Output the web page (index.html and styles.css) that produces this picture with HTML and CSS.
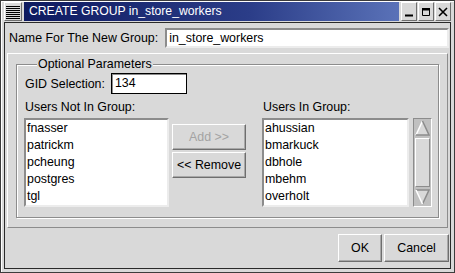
FILE: index.html
```html
<!DOCTYPE html>
<html lang="en">
<head>
    <meta charset="UTF-8">
    <title>CREATE GROUP in_store_workers</title>
    <link rel="stylesheet" href="styles.css">
</head>
<body>
    <div class="window">
        <div class="titlebar">
            <div class="menu-btn">
                <svg width="14" height="14" viewBox="0 0 14 14">
                    <path d="M0 1.5H14M0 3.5H14M0 5.5H14M0 7.5H14M0 9.5H14M0 11.5H14M0 13.5H14" stroke="#000" stroke-width="1"/>
                </svg>
            </div>
            <div class="title">CREATE GROUP in_store_workers</div>
            <div class="wm-btns">
                <div class="wm-btn">
                    <svg width="10" height="10" viewBox="0 0 10 10"><path d="M1 7.5H9V9.5H1Z" fill="#000"/></svg>
                </div>
                <div class="wm-btn">
                    <svg width="10" height="10" viewBox="0 0 10 10"><path d="M1.5 1.5H8.5V8.5H1.5Z" fill="none" stroke="#000"/><path d="M1 1H9V3.5H1Z" fill="#000"/></svg>
                </div>
                <div class="wm-btn">
                    <svg width="10" height="10" viewBox="0 0 10 10"><path d="M1 1L9 9M9 1L1 9" stroke="#000" stroke-width="1.6"/></svg>
                </div>
            </div>
        </div>

        <div class="client">
            <div class="name-row">
                <span class="label">Name For The New Group:</span>
                <div class="entry name-entry">in_store_workers</div>
            </div>

            <div class="panel">
                <div class="group">
                    <span class="legend">Optional Parameters</span>

                    <div class="gid-row">
                        <span class="label">GID Selection:</span>
                        <div class="entry gid-entry">134</div>
                    </div>

                    <div class="lists">
                        <div class="col col-left">
                            <div class="col-label">Users Not In Group:</div>
                            <div class="listbox">
                                <div class="item">fnasser</div>
                                <div class="item">patrickm</div>
                                <div class="item">pcheung</div>
                                <div class="item">postgres</div>
                                <div class="item">tgl</div>
                            </div>
                        </div>

                        <div class="mid">
                            <div class="btn btn-move disabled">Add &gt;&gt;</div>
                            <div class="btn btn-move">&lt;&lt; Remove</div>
                        </div>

                        <div class="col col-right">
                            <div class="col-label">Users In Group:</div>
                            <div class="list-wrap">
                                <div class="listbox">
                                    <div class="item">ahussian</div>
                                    <div class="item">bmarkuck</div>
                                    <div class="item">dbhole</div>
                                    <div class="item">mbehm</div>
                                    <div class="item">overholt</div>
                                </div>
                                <div class="scrollbar">
                                    <svg class="arrow" width="15" height="16" viewBox="0 0 15 16">
                                        <path d="M7.5 1L1 15H14Z" fill="#d9d9d9"/>
                                        <path d="M7.5 1L1 15" stroke="#fff" stroke-width="1.5" fill="none"/>
                                        <path d="M7.5 1L14 15H1" stroke="#8c8c8c" stroke-width="1.5" fill="none"/>
                                    </svg>
                                    <div class="slider"></div>
                                    <svg class="arrow" width="15" height="16" viewBox="0 0 15 16">
                                        <path d="M1 1H14L7.5 15Z" fill="#d9d9d9"/>
                                        <path d="M1 1H14L7.5 15" stroke="#8c8c8c" stroke-width="1.5" fill="none"/>
                                        <path d="M1 1L7.5 15" stroke="#fff" stroke-width="1.5" fill="none"/>
                                    </svg>
                                </div>
                            </div>
                        </div>
                    </div>
                </div>
            </div>

            <div class="btn-row">
                <div class="btn btn-ok">OK</div>
                <div class="btn btn-cancel">Cancel</div>
            </div>
        </div>
    </div>
</body>
</html>
```

FILE: styles.css
```css
body {
    margin: 0;
    background: #d9d9d9;
    font-family: "Liberation Sans", Arial, sans-serif;
    font-size: 12.4px;
    color: #000;
}

.window {
    width: 455px;
    height: 273px;
    box-sizing: border-box;
    border: 1px solid #3c3c3c;
    box-shadow: inset 1px 1px 0 #fff;
    background: #d9d9d9;
    padding: 1px 3px 3px 3px;
    display: flex;
    flex-direction: column;
}

/* title bar */
.titlebar {
    height: 19px;
    display: flex;
    align-items: stretch;
}

.menu-btn {
    width: 18px;
    display: flex;
    justify-content: center;
    align-items: center;
    box-sizing: border-box;
    border: 1px solid;
    border-color: #fff #6e6e6e #6e6e6e #fff;
    background: #d9d9d9;
    margin-right: 2px;
}

.title {
    flex: 1;
    background: linear-gradient(to right, #0e1a60, #2b3d88 60%, #5a72b8);
    color: #fff;
    font-size: 12.2px;
    line-height: 19px;
    padding-left: 5px;
    white-space: nowrap;
}

.wm-btns {
    display: flex;
    gap: 1px;
    margin-left: 2px;
}

.wm-btn {
    width: 16px;
    box-sizing: border-box;
    border: 1px solid;
    border-color: #fff #6e6e6e #6e6e6e #fff;
    display: flex;
    justify-content: center;
    align-items: center;
}

/* client area */
.client {
    flex: 1;
    margin-top: 1px;
    border: 1px solid #2a2a2a;
    display: flex;
    flex-direction: column;
    padding: 0 1px;
}

.name-row {
    display: flex;
    align-items: center;
    height: 30px;
    padding-left: 3px;
}

.label {
    margin-right: 7px;
}

.entry {
    box-sizing: border-box;
    background: #fff;
    border: 2px solid;
    border-color: #8c8c8c #ececec #ececec #8c8c8c;
    line-height: 16px;
    padding-left: 2px;
}

.name-entry {
    flex: 1;
    height: 20px;
}

.panel {
    margin: 0 1px;
    border: 1px solid;
    border-color: #fff #8c8c8c #8c8c8c #fff;
    padding: 10px 8px 9px 8px;
}

.group {
    position: relative;
    border: 1px solid #8c8c8c;
    box-shadow: inset 1px 1px 0 #fff, 1px 1px 0 #fff;
    padding: 8px 6px 10px 7px;
}

.legend {
    position: absolute;
    top: -8px;
    left: 20px;
    background: #d9d9d9;
    padding: 0 1px;
    line-height: 14px;
}

.gid-row {
    display: flex;
    align-items: center;
    padding-left: 1px;
}

.gid-row .label {
    margin-right: 6px;
}

.gid-entry {
    width: 76px;
    height: 21px;
    border: 1px solid #000;
    box-shadow: inset 1px 1px 0 #8c8c8c;
    padding-left: 3px;
    line-height: 19px;
}

.lists {
    display: flex;
    margin-top: 6px;
}

.col-label {
    height: 18px;
    line-height: 14px;
    padding-left: 1px;
}

.listbox {
    box-sizing: border-box;
    height: 89px;
    background: #fff;
    border: 2px solid;
    border-color: #8c8c8c #ececec #ececec #8c8c8c;
    padding-left: 1px;
    overflow: hidden;
}

.item {
    line-height: 17px;
}

.col-left .listbox {
    width: 145px;
}

.mid {
    width: 75px;
    margin: 24px 16px 0 3px;
    display: flex;
    flex-direction: column;
    gap: 2px;
}

.btn {
    box-sizing: border-box;
    border: 1px solid;
    border-color: #fff #6e6e6e #6e6e6e #fff;
    box-shadow: inset -1px -1px 0 #a8a8a8;
    text-align: center;
    display: flex;
    justify-content: center;
    align-items: center;
}

.btn-move {
    height: 26px;
}

.btn.disabled {
    color: #a3a3a3;
}

.list-wrap {
    display: flex;
    gap: 4px;
}

.col-right .listbox {
    width: 147px;
}

.scrollbar {
    width: 19px;
    height: 89px;
    box-sizing: border-box;
    background: #c0c0c0;
    border: 1px solid;
    border-color: #8c8c8c #fff #fff #8c8c8c;
    display: flex;
    flex-direction: column;
    align-items: center;
    padding: 1px 0;
}

.arrow {
    display: block;
}

.slider {
    width: 15px;
    flex: 1;
    margin: 2px 0;
    box-sizing: border-box;
    background: #d9d9d9;
    border: 1px solid;
    border-color: #fff #8c8c8c #8c8c8c #fff;
}

/* bottom buttons */
.btn-row {
    flex: 1;
    display: flex;
    justify-content: flex-end;
    align-items: flex-start;
    gap: 2px;
    padding: 6px 0 0 0;
}

.btn-ok,
.btn-cancel {
    height: 28px;
}

.btn-ok {
    width: 44px;
}

.btn-cancel {
    width: 65px;
}
```
